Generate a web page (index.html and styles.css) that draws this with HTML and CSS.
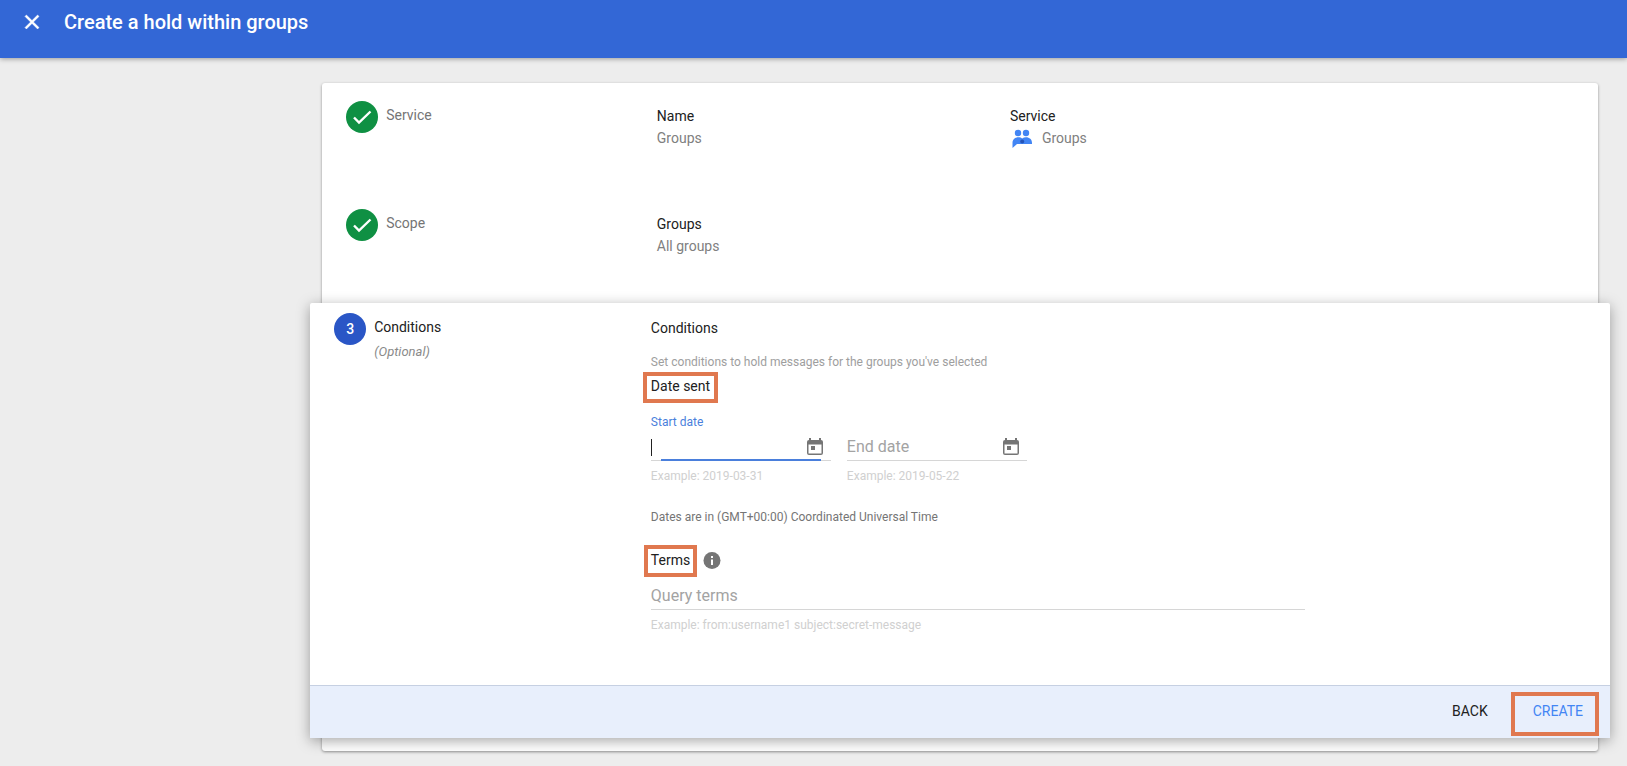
FILE: index.html
```html
<!DOCTYPE html>
<html lang="en">
<head>
<meta charset="utf-8">
<title>Create a hold within groups</title>
<link rel="stylesheet" href="styles.css">
</head>
<body>
<header class="topbar">
  <button class="close" type="button" aria-label="Close">
    <svg viewBox="0 0 24 24" width="24" height="24"><path fill="currentColor" stroke="currentColor" stroke-width=".5" d="M19 6.410 17.590 5 12 10.590 6.410 5 5 6.410 10.590 12 5 17.590 6.410 19 12 13.410 17.590 19 19 17.590 13.410 12z"/></svg>
  </button>
  <h1 class="title">Create a hold within groups</h1>
</header>
<main class="stepper">
  <section class="step">
    <div class="step-head">
      <span class="badge done"><svg viewBox="0 0 24 24" width="24" height="24"><path fill="none" stroke="currentColor" stroke-width="2.400" d="M4 12.500 9 17.500 20.500 6.500"/></svg></span>
      <span class="step-name">Service</span>
    </div>
    <dl class="facts">
      <div class="fact"><dt>Name</dt><dd>Groups</dd></div>
      <div class="fact"><dt>Service</dt><dd class="service">
        <svg viewBox="0 0 20 20" width="20" height="20"><g fill="#4285f4"><circle cx="6" cy="5" r="3.200"/><circle cx="14" cy="5" r="3.200"/><path d="M.5 20v-5C.5 11.500 3 9.300 6.500 9.300c1.500 0 2.800.4 3.700 1.200 1-.8 2.300-1.200 3.800-1.200 3.500 0 6 2.200 6 5.700v1H5z"/></g><circle cx="10.200" cy="13.500" r="2" fill="#2453b8"/></svg>
        Groups</dd></div>
    </dl>
  </section>
  <section class="step">
    <div class="step-head">
      <span class="badge done"><svg viewBox="0 0 24 24" width="24" height="24"><path fill="none" stroke="currentColor" stroke-width="2.400" d="M4 12.500 9 17.500 20.500 6.500"/></svg></span>
      <span class="step-name">Scope</span>
    </div>
    <dl class="facts">
      <div class="fact"><dt>Groups</dt><dd>All groups</dd></div>
    </dl>
  </section>
  <form class="active">
    <div class="step current">
      <div class="step-head">
        <span class="badge number">3</span>
        <div class="step-name"><div>Conditions</div><div class="optional">(Optional)</div></div>
      </div>
      <div class="fields">
        <h2 class="heading">Conditions</h2>
        <p class="intro">Set conditions to hold messages for the groups you've selected</p>
        <h3 class="heading"><span class="mark">Date sent</span></h3>
        <div class="dates">
          <div class="field">
            <label class="label" for="start">Start date</label>
            <div class="control focused">
              <input id="start" type="text">
              <button class="pick" type="button" aria-label="Pick start date"><svg viewBox="0 0 16 18" width="16" height="18"><path fill="currentColor" fill-rule="evenodd" d="M2 2V0h2v2h8V0h2v2a2 2 0 0 1 2 2v11a2 2 0 0 1-2 2H2a2 2 0 0 1-2-2V4a2 2 0 0 1 2-2zM1.500 6.500h13v9h-13zM4 8h4v4H4z"/></svg></button>
            </div>
            <p class="example">Example: 2019-03-31</p>
          </div>
          <div class="field">
            <div class="control">
              <input type="text" placeholder="End date" aria-label="End date">
              <button class="pick" type="button" aria-label="Pick end date"><svg viewBox="0 0 16 18" width="16" height="18"><path fill="currentColor" fill-rule="evenodd" d="M2 2V0h2v2h8V0h2v2a2 2 0 0 1 2 2v11a2 2 0 0 1-2 2H2a2 2 0 0 1-2-2V4a2 2 0 0 1 2-2zM1.500 6.500h13v9h-13zM4 8h4v4H4z"/></svg></button>
            </div>
            <p class="example">Example: 2019-05-22</p>
          </div>
        </div>
        <p class="zone">Dates are in (GMT+00:00) Coordinated Universal Time</p>
        <div class="terms">
          <h3 class="heading"><span class="mark snug">Terms</span></h3>
          <svg class="info" viewBox="0 0 18 18" width="18" height="18"><circle cx="9" cy="9.500" r="8.500" fill="#757575"/><path fill="#fff" d="M8 5h2v2H8zM8 8.500h2V14H8z"/></svg>
        </div>
        <div class="control query"><input type="text" placeholder="Query terms" aria-label="Query terms"></div>
        <p class="example">Example: from:username1 subject:secret-message</p>
      </div>
    </div>
    <div class="actions">
      <button class="action" type="button">BACK</button>
      <button class="action create" type="submit">CREATE</button>
    </div>
  </form>
</main>
</body>
</html>
```
FILE: styles.css
```css
* { box-sizing: border-box; }
body {
  margin: 0;
  background: #ededed;
  color: #212121;
  font: 14px/20px Roboto, "Liberation Sans", sans-serif;
}
h1, h2, h3, p, dl, dd { margin: 0; font-size: 14px; font-weight: 400; }
button { border: 0; padding: 0; background: none; font: inherit; color: inherit; }
svg { display: block; }

.topbar {
  display: flex;
  align-items: flex-start;
  gap: 20px;
  height: 58px;
  padding: 10px 20px;
  background: #3367d6;
  color: #fff;
  box-shadow: 0 1px 5px rgba(0, 0, 0, .35);
}
.title { font-size: 20px; line-height: 24px; font-weight: 500; }

.stepper {
  margin: 25px 29px 15px 19.8%;
  padding-bottom: 13px;
  background: #fff;
  border-radius: 3px;
  box-shadow: 0 1px 3px rgba(0, 0, 0, .4);
}
.step {
  display: grid;
  grid-template-columns: 25.3% 1fr;
  min-height: 108px;
  padding: 18px 24px 0;
}
.step-head { display: flex; gap: 8px; color: #757575; }
.badge {
  display: flex;
  align-items: center;
  justify-content: center;
  width: 32px;
  height: 32px;
  border-radius: 50%;
  color: #fff;
}
.done { background: #0f9043; }
.number { background: #2a56c6; font-weight: 500; }
.step-name { padding-top: 4px; }
.facts { display: grid; grid-template-columns: 38.5% 1fr; padding-top: 4px; }
.fact { line-height: 22px; }
dd { color: #808080; }
.service { display: flex; align-items: center; gap: 10px; padding-left: 2px; }

.active {
  position: relative;
  margin: 4px -12px 0;
  background: #fff;
  border-radius: 2px;
  box-shadow: 0 3px 14px rgba(0, 0, 0, .35);
}
.current { padding-top: 10px; }
.current .step-head { color: #212121; }
.optional { margin-top: 5px; color: #8a8a8a; font-size: 13px; font-style: italic; }
.fields { padding: 5px 0 52px; }
.intro { margin: 16px 0 6px; color: #9e9e9e; font-size: 12px; line-height: 16px; }
.mark { position: relative; }
.mark::after {
  content: "";
  position: absolute;
  inset: -6px -8px -9px;
  border: 4px solid #e0784f;
}
.snug::after { inset: -7px -7px -9px; }
.dates { display: flex; align-items: flex-end; gap: 16px; margin-top: 18px; }
.field { width: 180px; }
.label { display: block; color: #4a7fdc; font-size: 12px; line-height: 16px; }
.control {
  position: relative;
  display: flex;
  align-items: center;
  height: 31px;
  padding: 4px 8px 0 0;
  border-bottom: 1px solid #d6d6d6;
}
.control input {
  flex: 1;
  min-width: 0;
  padding: 0;
  border: 0;
  outline: 0;
  background: none;
  color: #212121;
  font: 16px/20px Roboto, "Liberation Sans", sans-serif;
}
.control input::placeholder { color: #a3a3a3; opacity: 1; }
.focused::before {
  content: "";
  position: absolute;
  left: 0;
  top: 9px;
  width: 1px;
  height: 17px;
  background: #212121;
}
.focused::after {
  content: "";
  position: absolute;
  left: 10px;
  right: 10px;
  bottom: -1px;
  height: 2px;
  background: #4a7fdc;
}
.pick { color: #757575; }
.example { margin-top: 7px; color: #d0d0d0; font-size: 12px; line-height: 16px; }
.zone { margin-top: 25px; color: #757575; font-size: 12px; line-height: 16px; }
.terms { display: flex; align-items: center; gap: 13px; margin-top: 25px; }
.query { width: 70%; margin-top: 9px; }

.actions {
  display: flex;
  justify-content: flex-end;
  gap: 45px;
  padding: 15px 27px 17px;
  background: #e8effc;
  border-top: 1px solid #c6d0e2;
}
.create { position: relative; color: #4285f4; }
.create::after {
  content: "";
  position: absolute;
  inset: -9px -16px -15px -22px;
  border: 4px solid #e0784f;
}
```
